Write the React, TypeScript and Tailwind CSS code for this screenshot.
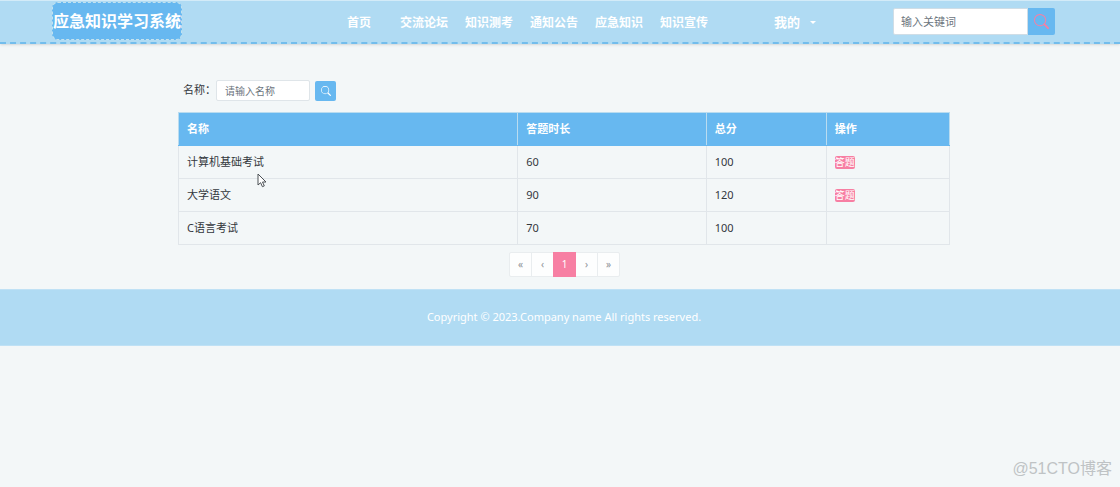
import React, { useState } from 'react';

interface Exam {
  name: string;
  duration: number;
  score: number;
  open: boolean;
}

const NAV_ITEMS = ['交流论坛', '知识测考', '通知公告', '应急知识', '知识宣传'];

const EXAMS: Exam[] = [
  { name: '计算机基础考试', duration: 60, score: 100, open: true },
  { name: '大学语文', duration: 90, score: 120, open: true },
  { name: 'C语言考试', duration: 70, score: 100, open: false },
];

const PAGES = ['«', '‹', '1', '›', '»'];

const SearchIcon: React.FC<{ className: string }> = ({ className }) => (
  <svg viewBox="0 0 16 16" fill="currentColor" className={className} aria-hidden="true">
    <path d="M11.742 10.344a6.5 6.5 0 1 0-1.397 1.398h-.001c.03.04.062.078.098.115l3.85 3.85a1 1 0 0 0 1.415-1.414l-3.85-3.85a1.007 1.007 0 0 0-.115-.1zM12 6.5a5.5 5.5 0 1 1-11 0 5.5 5.5 0 0 1 11 0z" />
  </svg>
);

const Header: React.FC = () => {
  const [keyword, setKeyword] = useState('');

  return (
    <header className="flex h-11 items-center border-t border-b-2 border-t-[#d3ebf8] border-b-[#72bdec] border-dashed bg-[#b0dbf3] pr-[65px] pl-[52px] shadow-sm [border-top-style:solid]">
      <a
        href="#"
        className="mb-px flex h-[38px] shrink-0 items-center rounded-md border border-dashed border-[#c3e2ee] bg-[#67b8f0] text-base font-bold text-white"
      >
        应急知识学习系统
      </a>
      <nav className="flex flex-1 items-center justify-end pt-[3px] text-xs font-bold whitespace-nowrap text-white">
        <a href="#" className="mr-[29px]">首页</a>
        <div className="flex gap-[17px]">
          {NAV_ITEMS.map(item => (
            <a key={item} href="#">{item}</a>
          ))}
        </div>
        <button type="button" className="ml-[66px] flex items-center gap-2.5 text-[13px] font-bold">
          我的
          <svg viewBox="0 0 6 3" fill="currentColor" className="h-[3px] w-1.5" aria-hidden="true">
            <path d="M0 0h6L3 3z" />
          </svg>
        </button>
      </nav>
      <form className="ml-[77px] flex h-[27px] shrink-0" onSubmit={e => e.preventDefault()}>
        <input
          type="text"
          aria-label="输入关键词"
          placeholder="输入关键词"
          value={keyword}
          onChange={e => setKeyword(e.target.value)}
          className="w-[135px] rounded-l-xs border border-[#cfdde6] bg-white px-[7px] pt-0.5 text-[11px] text-gray-700 outline-none placeholder:text-[#6c757d]"
        />
        <button
          type="submit"
          aria-label="搜索"
          className="flex w-[27px] items-center justify-center rounded-r-xs bg-[#67b8f0] text-[#f77fa3]"
        >
          <SearchIcon className="size-[15px]" />
        </button>
      </form>
    </header>
  );
};

const ExamTable: React.FC = () => {
  const headClass = "border border-[#b9dcf0] border-b-[#67b8f0] px-2 text-left font-bold";
  const cellClass = "border border-[#e1e6ea] px-2";

  return (
    <table className="w-full table-fixed border-collapse text-[11px] text-[#33383d]">
      <thead>
        <tr className="h-[33px] bg-[#67b8f0] text-white">
          <th className={`w-[44%] ${headClass}`}>名称</th>
          <th className={headClass}>答题时长</th>
          <th className={`w-[120px] ${headClass}`}>总分</th>
          <th className={`w-[16%] ${headClass}`}>操作</th>
        </tr>
      </thead>
      <tbody>
        {EXAMS.map(exam => (
          <tr key={exam.name} className="h-[33px]">
            <td className={cellClass}>{exam.name}</td>
            <td className={cellClass}>{exam.duration}</td>
            <td className={cellClass}>{exam.score}</td>
            <td className={cellClass}>
              {exam.open && (
                <button type="button" className="block h-[13px] rounded-xs bg-[#f77fa3] text-[10px] leading-[13px] text-white">
                  答题
                </button>
              )}
            </td>
          </tr>
        ))}
      </tbody>
    </table>
  );
};

const App: React.FC = () => {
  const [name, setName] = useState('');

  return (
    <div className="relative min-h-screen bg-[#f3f7f8] font-['Noto_Sans','Noto_Sans_CJK_SC',sans-serif]">
      <Header />

      <main className="pl-2">
        <div className="mx-auto w-full max-w-[772px] pt-9 pb-3">
          <form className="mb-[11px] flex h-[21px] items-center pl-[5px]" onSubmit={e => e.preventDefault()}>
            <label htmlFor="exam-name" className="text-[11px] whitespace-nowrap text-[#33383d]">名称：</label>
            <input
              id="exam-name"
              type="text"
              placeholder="请输入名称"
              value={name}
              onChange={e => setName(e.target.value)}
              className="h-full w-[94px] rounded-xs border border-[#dfe5e9] bg-white px-2 text-[10px] text-gray-700 outline-none placeholder:text-[#6c757d]"
            />
            <button
              type="submit"
              aria-label="查询"
              className="ml-[5px] flex h-5 w-[21px] items-center justify-center rounded-xs bg-[#67b8f0] text-white"
            >
              <SearchIcon className="size-2.5" />
            </button>
          </form>

          <ExamTable />

          <div className="mt-[7px] flex justify-center">
            {PAGES.map(page => (
              <button
                key={page}
                type="button"
                className={
                  page === '1'
                    ? "relative -mr-px h-[25px] w-[23px] bg-[#f77fa3] text-[10px] text-white"
                    : "-mr-px h-[25px] w-[23px] border border-[#e9edef] bg-[#fdfefe] text-[10px] text-[#8d9297] first:rounded-l-xs last:rounded-r-xs"
                }
              >
                {page}
              </button>
            ))}
          </div>
        </div>
      </main>

      <footer className="flex h-[57px] items-center justify-center border-y border-[#bfe1f5] bg-[#b0dbf3] pl-2 text-[11px] text-white">
        Copyright © 2023.Company name All rights reserved.
      </footer>

      {/* mouse pointer */}
      <svg viewBox="0 0 10 15" className="absolute top-[173px] left-[257px] h-[15px] w-2.5" aria-hidden="true">
        <path d="M1 1v11l2.6-2.3 1.8 4 1.9-.8-1.8-3.9H9z" fill="#fff" stroke="#4b5055" strokeWidth="1" />
      </svg>

      <div className="absolute right-2 bottom-1.5 font-['Liberation_Sans','Noto_Sans_CJK_SC',sans-serif] text-base text-[#bfc3c5]">
        @51CTO博客
      </div>
    </div>
  );
};

export default App;
